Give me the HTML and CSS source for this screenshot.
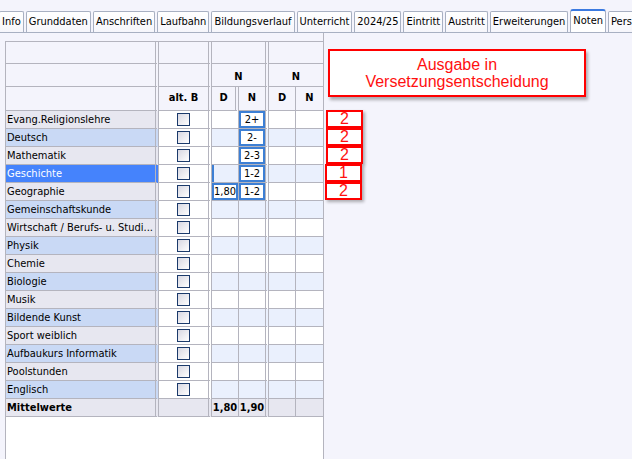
FILE: index.html
```html
<!DOCTYPE html>
<html lang="de">
<head>
  <meta charset="UTF-8" />
  <title>Noten</title>
  <link rel="stylesheet" href="styles.css">
</head>
<body>
  <!-- Reiter -->
  <div class="tabs">
    <div class="tab">Info</div>
    <div class="tab">Grunddaten</div>
    <div class="tab">Anschriften</div>
    <div class="tab">Laufbahn</div>
    <div class="tab">Bildungsverlauf</div>
    <div class="tab">Unterricht</div>
    <div class="tab">2024/25</div>
    <div class="tab">Eintritt</div>
    <div class="tab">Austritt</div>
    <div class="tab">Erweiterungen</div>
    <div class="tab active">Noten</div>
    <div class="tab">Personalien</div>
  </div>

  <div class="content">
    <!-- Notentabelle -->
    <div class="grid-panel">
      <div class="grades">
        <div class="row head">
          <div></div><div></div><div class="group"></div><div class="group"></div>
        </div>
        <div class="row head">
          <div></div><div></div><div class="group">N</div><div class="group">N</div>
        </div>
        <div class="row head cols">
          <div></div><div>alt. B</div><div>D</div><div>N</div><div>D</div><div>N</div>
        </div>

        <div class="row">
          <div>Evang.Religionslehre</div><div><span class="box"></span></div>
          <div></div><div><span class="grade">2+</span></div><div></div><div></div>
        </div>
        <div class="row alt">
          <div>Deutsch</div><div><span class="box"></span></div>
          <div></div><div><span class="grade">2-</span></div><div></div><div></div>
        </div>
        <div class="row">
          <div>Mathematik</div><div><span class="box"></span></div>
          <div></div><div><span class="grade">2-3</span></div><div></div><div></div>
        </div>
        <div class="row alt selected">
          <div>Geschichte</div><div><span class="box"></span></div>
          <div class="cursor"></div><div><span class="grade">1-2</span></div><div></div><div></div>
        </div>
        <div class="row">
          <div>Geographie</div><div><span class="box"></span></div>
          <div><span class="grade">1,80</span></div><div><span class="grade">1-2</span></div><div></div><div></div>
        </div>
        <div class="row alt">
          <div>Gemeinschaftskunde</div><div><span class="box"></span></div>
          <div></div><div></div><div></div><div></div>
        </div>
        <div class="row">
          <div>Wirtschaft / Berufs- u. Studi...</div><div><span class="box"></span></div>
          <div></div><div></div><div></div><div></div>
        </div>
        <div class="row alt">
          <div>Physik</div><div><span class="box"></span></div>
          <div></div><div></div><div></div><div></div>
        </div>
        <div class="row">
          <div>Chemie</div><div><span class="box"></span></div>
          <div></div><div></div><div></div><div></div>
        </div>
        <div class="row alt">
          <div>Biologie</div><div><span class="box"></span></div>
          <div></div><div></div><div></div><div></div>
        </div>
        <div class="row">
          <div>Musik</div><div><span class="box"></span></div>
          <div></div><div></div><div></div><div></div>
        </div>
        <div class="row alt">
          <div>Bildende Kunst</div><div><span class="box"></span></div>
          <div></div><div></div><div></div><div></div>
        </div>
        <div class="row">
          <div>Sport weiblich</div><div><span class="box"></span></div>
          <div></div><div></div><div></div><div></div>
        </div>
        <div class="row alt">
          <div>Aufbaukurs Informatik</div><div><span class="box"></span></div>
          <div></div><div></div><div></div><div></div>
        </div>
        <div class="row">
          <div>Poolstunden</div><div><span class="box"></span></div>
          <div></div><div></div><div></div><div></div>
        </div>
        <div class="row alt">
          <div>Englisch</div><div><span class="box"></span></div>
          <div></div><div></div><div></div><div></div>
        </div>
        <div class="row total">
          <div>Mittelwerte</div><div></div>
          <div>1,80</div><div>1,90</div><div></div><div></div>
        </div>
      </div>
    </div>

    <!-- Ausgabe -->
    <div class="output-panel">
      <div class="output-title">Ausgabe in<br>Versetzungsentscheidung</div>
      <div class="output-list">
        <div class="out">2</div>
        <div class="out">2</div>
        <div class="out">2</div>
        <div class="out shift">1</div>
        <div class="out shift">2</div>
      </div>
    </div>
  </div>
</body>
</html>
```

FILE: styles.css
```css
html, body {
  margin: 0;
  height: 100%;
  overflow: hidden;
}
body {
  font-family: "DejaVu Sans Condensed", "DejaVu Sans", Tahoma, sans-serif;
  font-size: 11px;
  background: #f4f4fc;
  color: #000;
}

/* Reiter */
.tabs {
  display: flex;
  align-items: flex-end;
  gap: 2px;
  height: 32px;
  border-bottom: 1px solid #a8b0c2;
  margin-left: -1px;
  white-space: nowrap;
  overflow: hidden;
}
.tab {
  flex: none;
  height: 20px;
  line-height: 20px;
  padding: 0 2px;
  border: 1px solid #a8b0c2;
  border-bottom: none;
  border-radius: 2px 2px 0 0;
  background: linear-gradient(#ffffff, #f6f6fb);
}
.tab.active {
  height: 22px;
  line-height: 20px;
  margin-bottom: -1px;
  border-top: 2px solid #3b7ae0;
  border-radius: 3px 3px 0 0;
  background: #fff;
}

.content {
  display: flex;
  height: calc(100% - 33px);
}

/* Notentabelle */
.grid-panel {
  margin: 8px 0 0 5px;
  width: 319px;
  box-sizing: border-box;
  background: #fff;
  border-left: 1px solid #b4b4be;
  border-right: 1px solid #b4b4be;
}
.grades {
  display: grid;
  grid-template-columns: 153px 53px 27px 30px 27px 27px;
  grid-template-rows: 22px 23px 24px repeat(17, 18px);
  border-top: 1px solid #b4b4be;
}
.row {
  display: contents;
}
.row > div {
  box-sizing: border-box;
  border-right: 1px solid #b4b4be;
  border-bottom: 1px solid #b4b4be;
  overflow: hidden;
  white-space: nowrap;
  background: #fff;
  line-height: 17px;
}
.row > div:nth-child(1),
.row > div:nth-child(2),
.row > div:nth-child(4) {
  border-right: 4px double #b4b4be;
}
.row > div:last-child {
  border-right: none;
}
.head.row > div:nth-child(3) {
  border-right: 4px double #b4b4be;
}
.head > div {
  background: #f4f4fc;
  font-weight: bold;
  text-align: center;
  line-height: 22px;
}
.head > .group {
  grid-column: span 2;
  line-height: 26px;
}

/* Fachspalte */
.row > div:first-child {
  padding-left: 1px;
  background: #e7e7f0;
}
.row.alt > div:first-child {
  background: #c9d9f5;
}
.row.selected > div:first-child {
  background: #4583fc;
  color: #fff;
}
.head.row > div:first-child {
  background: #f4f4fc;
}

/* Notenspalten */
.row.alt > div:nth-child(n+3) {
  background: #eaf0fd;
}
.row > div:nth-child(2) {
  display: flex;
  align-items: center;
  justify-content: center;
}
.head.row > div:nth-child(2) {
  display: block;
}
.row > .cursor {
  box-shadow: inset 2px 0 #3d7fd4;
}
.row.total > div {
  background: #e7e7f0;
  font-weight: bold;
  text-align: center;
}
.row.total > div:first-child {
  text-align: left;
}
.box {
  width: 11px;
  height: 11px;
  border: 1px solid #1b3a6b;
  background: linear-gradient(135deg, #d8d8e2, #ffffff);
}
.grade {
  display: block;
  height: 17px;
  box-sizing: border-box;
  border: 2px solid #3d7fd4;
  background: #fff;
  text-align: center;
  line-height: 13px;
}

/* Ausgabe */
.output-panel {
  flex: 1;
  padding: 16px 0 0 4px;
  border-left: 1px solid #b4b4be;
  margin-left: -1px;
  font-family: "Liberation Sans", Arial, sans-serif;
  color: #ff1010;
}
.output-title {
  width: 258px;
  height: 48px;
  box-sizing: border-box;
  border: 2px solid #ff0000;
  background: #fff;
  text-align: center;
  font-size: 16px;
  line-height: 17px;
  padding-top: 5px;
  box-shadow: 2px 3px 3px rgba(0, 0, 0, 0.3);
}
.output-list {
  display: flex;
  flex-direction: column;
  margin: 13px 0 0 -2px;
}
.out {
  width: 37px;
  height: 18px;
  box-sizing: border-box;
  border: 2px solid #ff0000;
  background: #fff;
  text-align: center;
  font-size: 16px;
  line-height: 14px;
  box-shadow: 2px 2px 3px rgba(0, 0, 0, 0.3);
}
.out.shift {
  margin-left: -1px;
}
```
